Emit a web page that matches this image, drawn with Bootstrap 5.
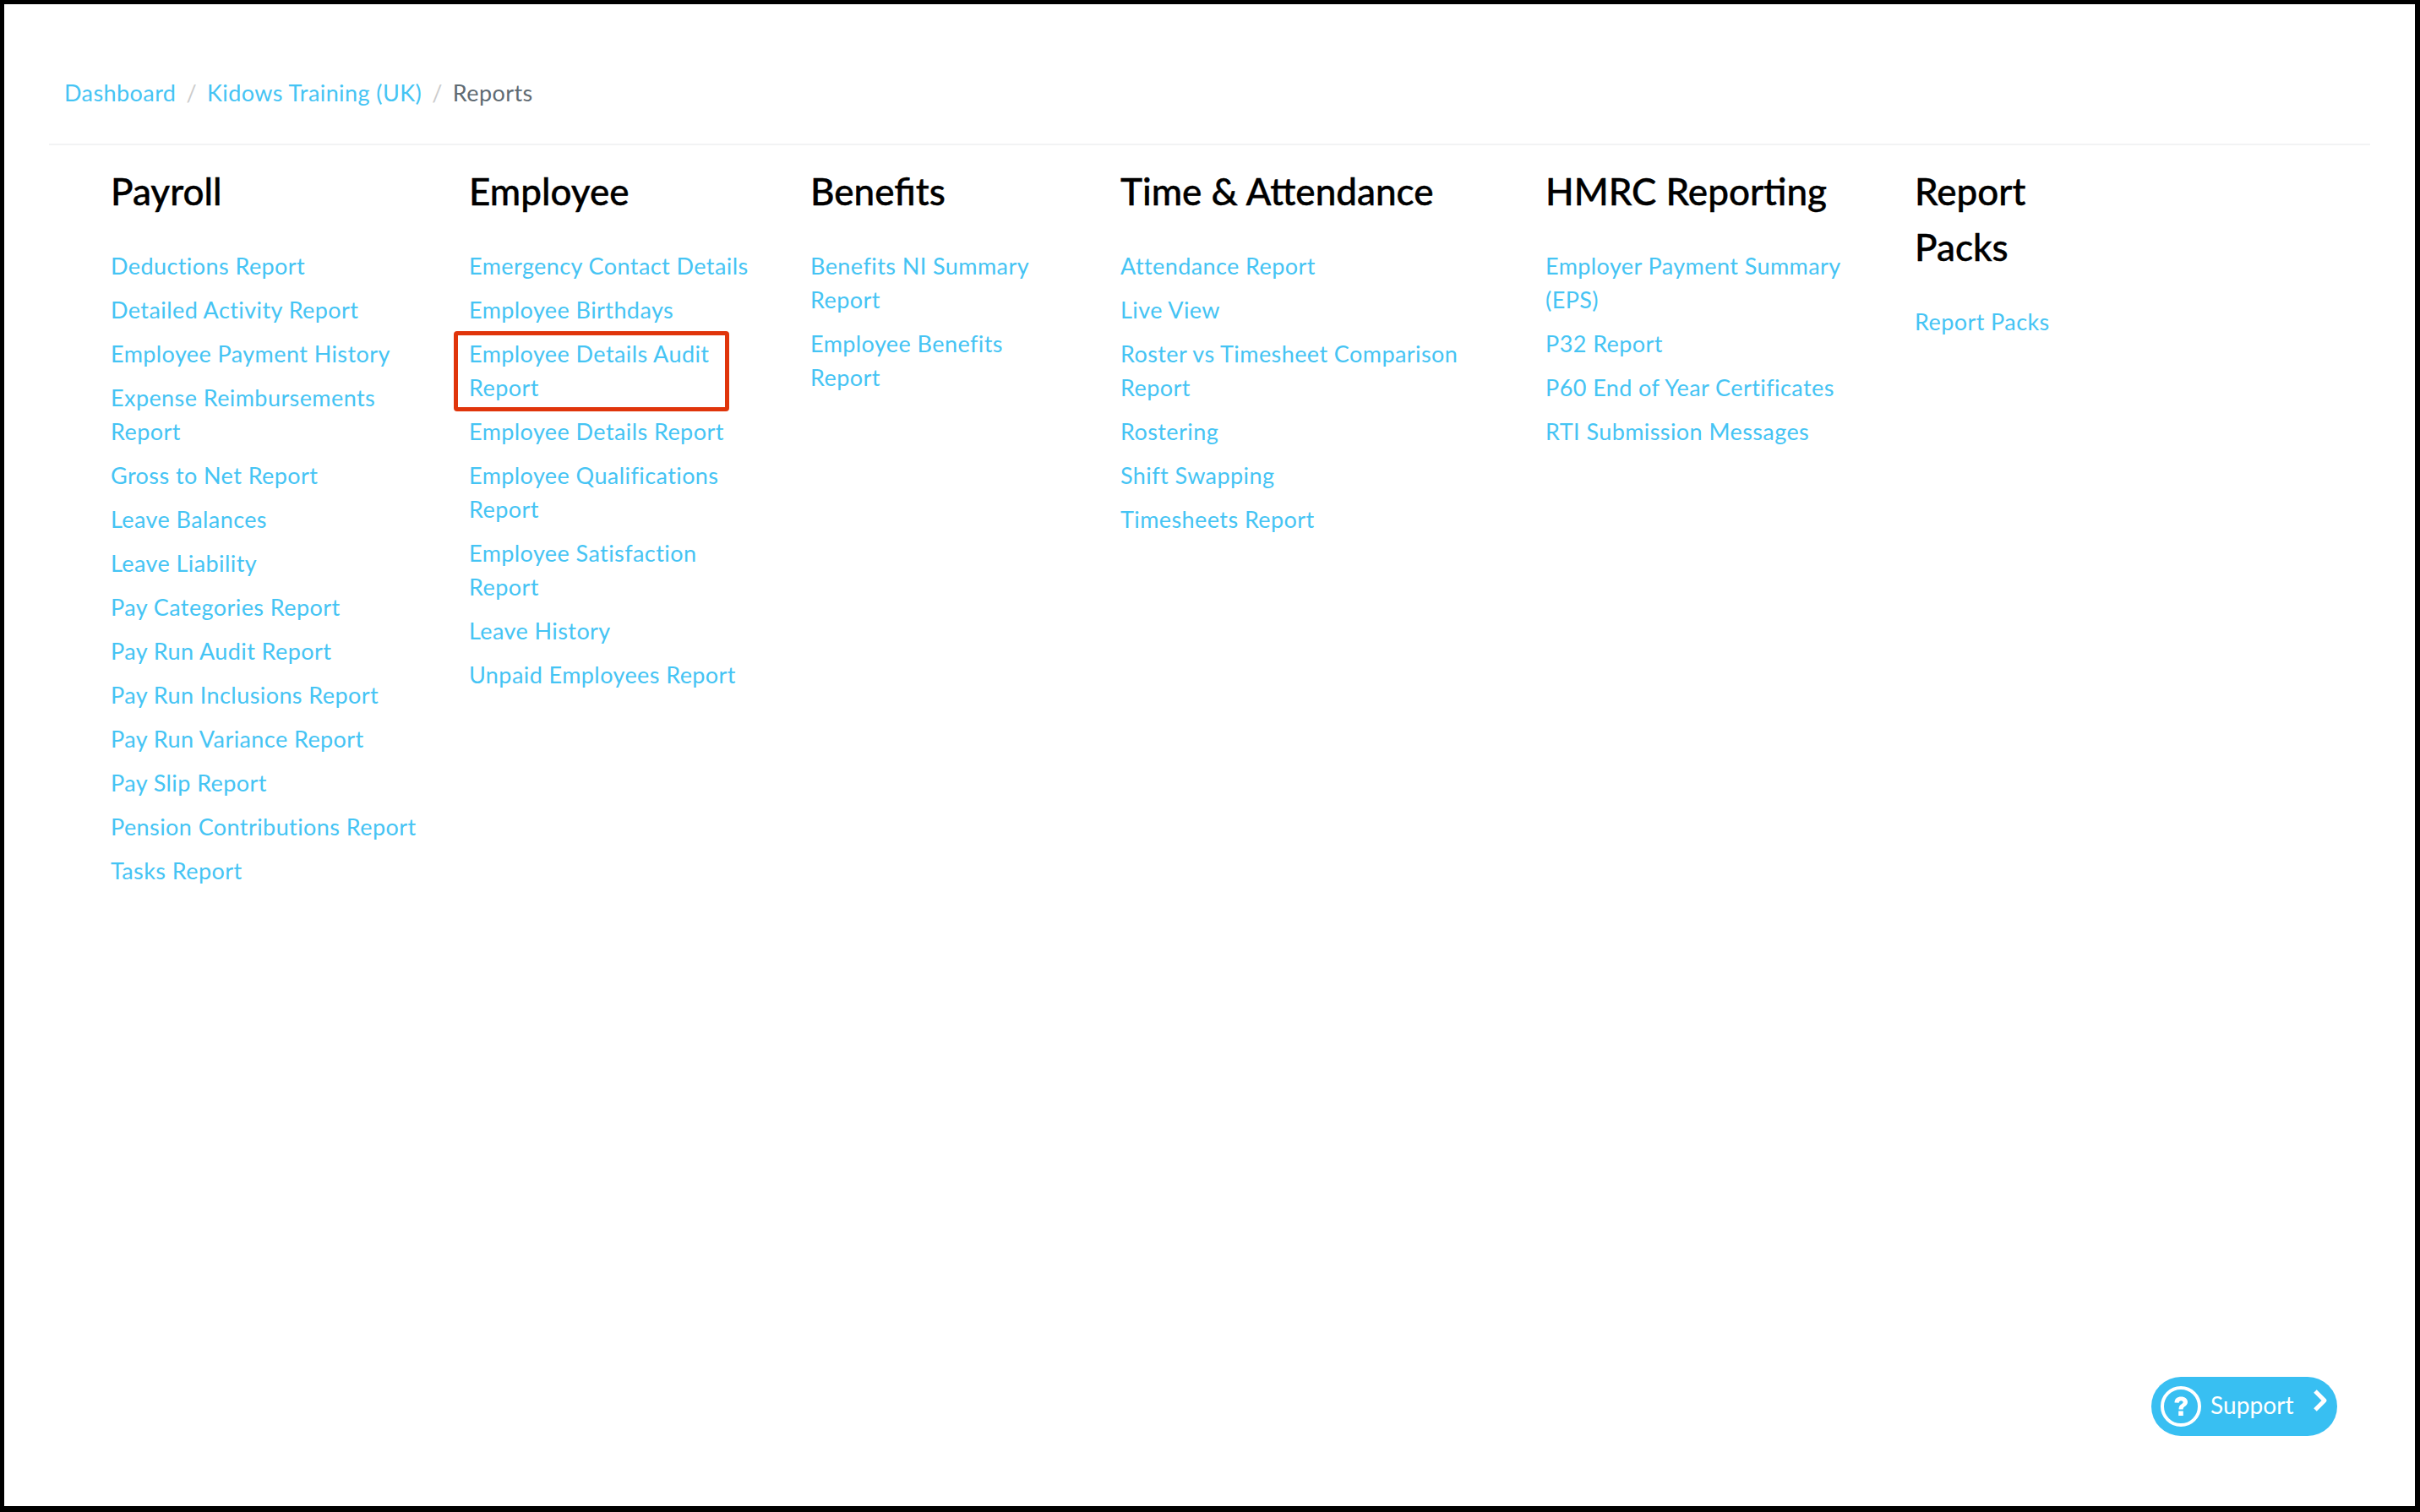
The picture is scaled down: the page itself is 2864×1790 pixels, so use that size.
<!doctype html>
<html lang="en">
<head>
<meta charset="utf-8">
<title>Reports</title>
<link href="https://cdn.jsdelivr.net/npm/bootstrap@5.3.0/dist/css/bootstrap.min.css" rel="stylesheet">
<style>
html,body{height:100%}
body{background:#000;font-family:"Lato","Liberation Sans",sans-serif;font-size:27px;line-height:40px;letter-spacing:.42px}
.frame{background:#fff;height:1778px;margin:5px 6px 0 5px;padding:85px 53px 0 53px;overflow:hidden}
.crumbs{margin:0;padding:0 0 0 18px;height:80px;--bs-breadcrumb-divider-color:#ccc;--bs-breadcrumb-item-active-color:#5f6b73;--bs-breadcrumb-item-padding-x:12px;--bs-breadcrumb-margin-bottom:0}
.crumbs a,.rep-links a{color:#45c4f4;text-decoration:none}
.rule{height:2px;background:#f2f3f4}
.rep-grid{display:grid;grid-template-columns:424px 404px 367px 503px 437px 200px;padding:21px 0 0 73px}
.rep-col h2{font-family:"Lato","Liberation Sans",sans-serif;font-size:44px;line-height:66px;font-weight:500;color:#000;margin:0 0 36px;letter-spacing:0;-webkit-text-stroke:.4px #000}
.rep-links li{margin-bottom:12px}
.w-a{padding-right:40px}.w-b{padding-right:60px}.w-c{padding-right:80px}.w-d{padding-right:50px}.w-e{padding-right:50px}
.marked{position:relative}
.marked::after{content:"";position:absolute;left:-18px;right:36px;top:-7px;bottom:-8px;border:5px solid #e0350b;border-radius:4px;pointer-events:none}
.support{position:fixed;left:2546px;top:1630px;width:220px;height:70px;border-radius:35px;background:#38bff2;color:#fff;font-size:28px;gap:11px;padding-left:11px;letter-spacing:.1px}
.support span{padding-bottom:4px}
.support .chev{position:absolute;left:191px;top:14px}
</style>
</head>
<body>
<div class="frame">
  <nav aria-label="breadcrumb">
    <ol class="breadcrumb crumbs">
      <li class="breadcrumb-item"><a href="#">Dashboard</a></li>
      <li class="breadcrumb-item"><a href="#">Kidows Training (UK)</a></li>
      <li class="breadcrumb-item active" aria-current="page">Reports</li>
    </ol>
  </nav>
  <div class="rule"></div>
  <div class="rep-grid">
    <div class="rep-col w-a">
      <h2>Payroll</h2>
      <ul class="list-unstyled rep-links">
        <li><a href="#">Deductions Report</a></li>
        <li><a href="#">Detailed Activity Report</a></li>
        <li><a href="#">Employee Payment History</a></li>
        <li><a href="#">Expense Reimbursements Report</a></li>
        <li><a href="#">Gross to Net Report</a></li>
        <li><a href="#">Leave Balances</a></li>
        <li><a href="#">Leave Liability</a></li>
        <li><a href="#">Pay Categories Report</a></li>
        <li><a href="#">Pay Run Audit Report</a></li>
        <li><a href="#">Pay Run Inclusions Report</a></li>
        <li><a href="#">Pay Run Variance Report</a></li>
        <li><a href="#">Pay Slip Report</a></li>
        <li><a href="#">Pension Contributions Report</a></li>
        <li><a href="#">Tasks Report</a></li>
      </ul>
    </div>
    <div class="rep-col w-b">
      <h2>Employee</h2>
      <ul class="list-unstyled rep-links">
        <li><a href="#">Emergency Contact Details</a></li>
        <li><a href="#">Employee Birthdays</a></li>
        <li class="marked"><a href="#">Employee Details Audit Report</a></li>
        <li><a href="#">Employee Details Report</a></li>
        <li><a href="#">Employee Qualifications Report</a></li>
        <li><a href="#">Employee Satisfaction Report</a></li>
        <li><a href="#">Leave History</a></li>
        <li><a href="#">Unpaid Employees Report</a></li>
      </ul>
    </div>
    <div class="rep-col w-c">
      <h2>Benefits</h2>
      <ul class="list-unstyled rep-links">
        <li><a href="#">Benefits NI Summary Report</a></li>
        <li><a href="#">Employee Benefits Report</a></li>
      </ul>
    </div>
    <div class="rep-col w-d">
      <h2>Time &amp; Attendance</h2>
      <ul class="list-unstyled rep-links">
        <li><a href="#">Attendance Report</a></li>
        <li><a href="#">Live View</a></li>
        <li><a href="#">Roster vs Timesheet Comparison Report</a></li>
        <li><a href="#">Rostering</a></li>
        <li><a href="#">Shift Swapping</a></li>
        <li><a href="#">Timesheets Report</a></li>
      </ul>
    </div>
    <div class="rep-col w-e">
      <h2>HMRC Reporting</h2>
      <ul class="list-unstyled rep-links">
        <li><a href="#">Employer Payment Summary (EPS)</a></li>
        <li><a href="#">P32 Report</a></li>
        <li><a href="#">P60 End of Year Certificates</a></li>
        <li><a href="#">RTI Submission Messages</a></li>
      </ul>
    </div>
    <div class="rep-col">
      <h2>Report Packs</h2>
      <ul class="list-unstyled rep-links">
        <li><a href="#">Report Packs</a></li>
      </ul>
    </div>
  </div>
</div>
<a href="#" class="support d-flex align-items-center text-decoration-none">
  <svg width="48" height="48" viewBox="0 0 48 48" aria-hidden="true"><circle cx="24" cy="24" r="22" fill="none" stroke="#fff" stroke-width="4"/><path d="M16.500 19.500c0-4.500 3.300-7 7.800-7 4.500 0 7.700 2.600 7.700 6.300 0 2.800-1.600 4.200-3.600 5.500-1.300.9-1.700 1.500-1.700 3.200h-5.200c0-3.200 1-4.600 3-6 1.400-1 2.100-1.500 2.100-2.500 0-1.100-.9-1.800-2.300-1.800-1.500 0-2.500.9-2.600 2.600z M21.200 29.500h5.600v5.500h-5.600z" fill="#fff"/></svg>
  <span>Support</span>
  <svg class="chev" width="18" height="28" viewBox="0 0 18 28" aria-hidden="true"><path d="M3 3l11 11L3 25" fill="none" stroke="#fff" stroke-width="5" stroke-linejoin="round"/></svg>
</a>
<script src="https://cdn.jsdelivr.net/npm/bootstrap@5.3.0/dist/js/bootstrap.bundle.min.js"></script>
</body>
</html>
